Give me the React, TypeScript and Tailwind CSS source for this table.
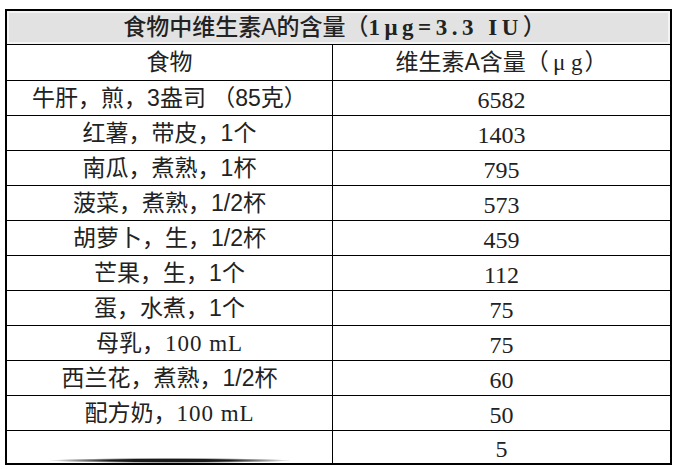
import React from "react";

const rows: { food: React.ReactNode; amount: string }[] = [
  { food: <>牛肝，煎，3盎司 （85克）</>, amount: "6582" },
  { food: <>红薯，带皮，1个</>, amount: "1403" },
  { food: <>南瓜，煮熟，1杯</>, amount: "795" },
  { food: <>菠菜，煮熟，1/2杯</>, amount: "573" },
  { food: <>胡萝卜，生，1/2杯</>, amount: "459" },
  { food: <>芒果，生，1个</>, amount: "112" },
  { food: <>蛋，水煮，1个</>, amount: "75" },
  {
    food: (
      <>
        母乳，<span className="font-['Liberation_Serif','Noto_Sans_CJK_SC',serif] tracking-[1px]">100 mL</span>
      </>
    ),
    amount: "75",
  },
  { food: <>西兰花，煮熟，1/2杯</>, amount: "60" },
  {
    food: (
      <>
        配方奶，<span className="font-['Liberation_Serif','Noto_Sans_CJK_SC',serif] tracking-[1px]">100 mL</span>
      </>
    ),
    amount: "50",
  },
];

export default function App() {
  return (
    <div className="w-[678px] h-[469px] bg-white pt-[9px] pl-[5px] overflow-hidden">
      <div className="w-[667px] border-2 border-black flex flex-col text-[#222] font-['Liberation_Sans','Noto_Sans_CJK_SC',sans-serif]">
        <div className="h-[34px] border-b border-black bg-[#e2e2e2] shadow-[inset_0_0_0_2px_#f3f3f3] flex items-center justify-center text-[23px] font-medium leading-none pr-[8px]">
          <span>食物中维生素A的含量（</span>
          <span className="font-['Liberation_Serif',serif] font-bold tracking-[4.5px]">1μg=3.3 IU</span>
          <span>）</span>
        </div>
        <div className="h-[36px] border-b border-black flex text-[23px] leading-none">
          <div className="w-[326px] border-r border-black flex items-center justify-center">食物</div>
          <div className="flex-1 flex items-center justify-center">
            维生素A含量（<span className="font-['Liberation_Serif',serif] ml-[4px] mr-[2px]">μ g</span>）
          </div>
        </div>
        {rows.map((r, i) => (
          <div key={i} className="h-[35px] border-b border-black flex text-[23px] leading-none">
            <div className="w-[326px] border-r border-black flex items-center justify-center">{r.food}</div>
            <div className="flex-1 flex items-center justify-center font-['Liberation_Serif',serif] text-[24px] pt-[3px]">
              {r.amount}
            </div>
          </div>
        ))}
        <div className="h-[32px] flex text-[23px] leading-none">
          <div className="w-[326px] border-r border-black flex flex-col items-center justify-end">
            <div className="w-[240px] h-[5px] bg-[radial-gradient(ellipse_at_center,#1a1a1a_35%,rgba(0,0,0,0)_72%)]" />
          </div>
          <div className="flex-1 flex items-center justify-center font-['Liberation_Serif',serif] text-[24px] pt-[3px]">5</div>
        </div>
      </div>
    </div>
  );
}
